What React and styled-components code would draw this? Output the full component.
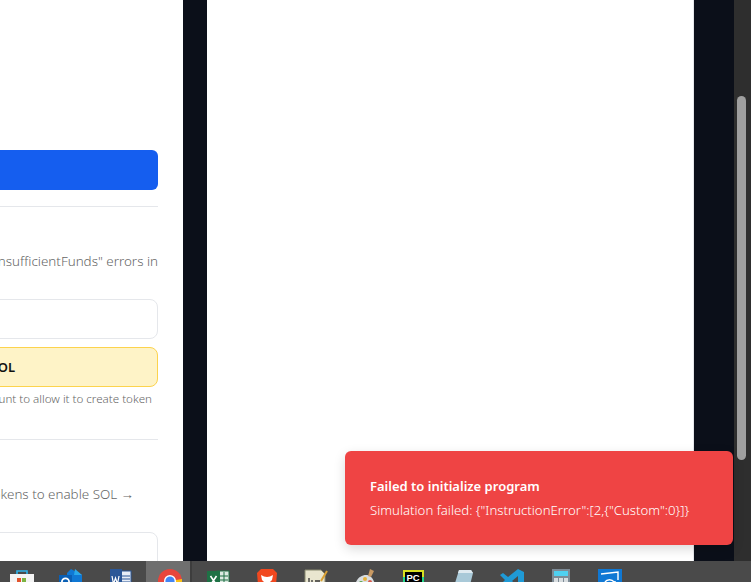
import React from 'react';
import styled, { createGlobalStyle } from 'styled-components';

const GlobalStyle = createGlobalStyle`
  html, body {
    margin: 0;
    padding: 0;
    height: 100%;
    overflow: hidden;
    background: #fff;
  }
  body {
    font-family: 'Noto Sans', 'Open Sans', sans-serif;
  }
`;

const Screen = styled.div`
  position: relative;
  width: 751px;
  height: 582px;
  overflow: hidden;
  display: flex;
  flex-direction: column;
`;

const Page = styled.div`
  flex: 1;
  min-height: 0;
  display: grid;
  grid-template-columns: 183px 24px 487px 40px 17px;
`;

const SidePanel = styled.section`
  background: #fff;
  overflow: hidden;
  padding: 150px 25px 0 0;
  display: flex;
  flex-direction: column;
  align-items: stretch;
`;

const Gutter = styled.div`
  background: #0b0f19;
`;

const Preview = styled.div`
  background: #fff;
  border-right: 1px solid #e5e7eb;
`;

const Track = styled.div`
  background: #2e2e2e;
  padding: 96px 5px 0 3px;
`;

const Thumb = styled.div`
  height: 364px;
  border-radius: 5px;
  background: #9f9f9f;
`;

const PrimaryButton = styled.div`
  height: 40px;
  flex: none;
  margin-left: -20px;
  background: #155eef;
  border-radius: 6px;
`;

const Divider = styled.hr`
  flex: none;
  align-self: stretch;
  height: 1px;
  margin: ${p => p.$top}px 0 0 -20px;
  border: 0;
  background: #e5e7eb;
`;

const Line = styled.p`
  margin: ${p => p.$top}px 0 0;
  padding-right: ${p => p.$inset || 0}px;
  display: flex;
  justify-content: flex-end;
  white-space: nowrap;
  font-size: ${p => p.$size || 13.4}px;
  font-weight: 300;
  line-height: 18px;
  color: #666;
`;

const Field = styled.div`
  flex: none;
  height: 40px;
  box-sizing: border-box;
  margin: ${p => p.$top}px 0 0 -20px;
  background: #fff;
  border: 1px solid #e5e7eb;
  border-radius: 8px;
`;

const Notice = styled.div`
  flex: none;
  height: 40px;
  box-sizing: border-box;
  margin: 8px 0 0 -20px;
  padding-right: 142px;
  display: flex;
  align-items: center;
  justify-content: flex-end;
  white-space: nowrap;
  font-size: 13px;
  font-weight: 600;
  color: #111;
  background: #fef3c7;
  border: 1px solid #fcd34d;
  border-radius: 8px;
`;

const Toast = styled.div`
  position: absolute;
  left: 345px;
  top: 451px;
  width: 388px;
  height: 94px;
  box-sizing: border-box;
  padding: 25px 25px 0;
  color: #fff;
  background: #ef4444;
  border-radius: 6px;
  box-shadow: 0 4px 12px rgba(0, 0, 0, 0.15);
`;

const ToastTitle = styled.div`
  font-size: 13px;
  font-weight: 600;
  line-height: 20px;
  white-space: nowrap;
`;

const ToastBody = styled.div`
  margin-top: 4px;
  font-size: 13.2px;
  font-weight: 300;
  line-height: 20px;
  white-space: nowrap;
  color: #fff;
`;

const Taskbar = styled.footer`
  flex: none;
  height: 21px;
  overflow: hidden;
  display: flex;
  margin-left: -3px;
  background: #4a4a4a;
`;

const Slot = styled.div`
  flex: none;
  width: 49px;
  box-sizing: border-box;
  padding-top: 8px;
  display: flex;
  justify-content: center;
  svg {
    flex: none;
    display: block;
  }
`;

const ActiveSlot = styled(Slot)`
  width: 46px;
  margin: 0 1px 0 2px;
  padding-left: 4px;
  background: #6f6f6f;
  border-right: 2px solid #3d3d3d;
`;

const Icon = ({ children }) => (
  <svg width="24" height="24" viewBox="0 0 24 24">
    {children}
  </svg>
);

const icons = [
  <Icon key="store">
    <path d="M7 5V2h10v3" fill="none" stroke="#2fb4ea" strokeWidth="1.6" />
    <rect x="0" y="5" width="24" height="19" fill="#f4f4f4" />
    <rect x="7" y="9" width="4" height="4" fill="#e2532c" />
    <rect x="12" y="9" width="4" height="4" fill="#7cb342" />
  </Icon>,
  <Icon key="outlook">
    <path d="M12 0l11 6v12H8V4z" fill="#0f78d4" />
    <path d="M16 0l7 6h-8z" fill="#28a8ea" />
    <rect x="0" y="6" width="13" height="18" fill="#0a5fb4" />
    <circle cx="6.5" cy="13" r="3.6" fill="none" stroke="#fff" strokeWidth="1.8" />
  </Icon>,
  <Icon key="word">
    <rect x="9" y="2" width="14" height="22" fill="#e8eef7" stroke="#2b5797" />
    <path d="M14 7h8M14 10h8M14 13h8" stroke="#2b5797" strokeWidth="1.2" />
    <rect x="2" y="0" width="12" height="24" fill="#2b5797" />
    <path d="M4 7l1.5 8 2-6 2 6L11 7" fill="none" stroke="#fff" strokeWidth="1.2" />
  </Icon>,
  <Icon key="chrome">
    <circle cx="12" cy="12" r="12" fill="#e8453c" />
    <path d="M3 19l9-7 9 7a12 12 0 0 1-18 0z" fill="#34a853" />
    <path d="M12 12L24 10a12 12 0 0 1-3 10z" fill="#fbc116" />
    <circle cx="12" cy="12" r="6" fill="#fff" />
    <circle cx="12" cy="12" r="4.6" fill="#4285f4" />
  </Icon>,
  <Icon key="excel">
    <rect x="11" y="2" width="12" height="22" fill="#dcebe2" stroke="#1e7145" />
    <path d="M14 7h8M14 11h8M14 15h8M18 3v16" stroke="#1e7145" strokeWidth="1" />
    <rect x="1" y="2" width="13" height="22" fill="#1e7145" />
    <path d="M4.5 7l6 9M10.5 7l-6 9" stroke="#fff" strokeWidth="1.6" />
  </Icon>,
  <Icon key="brave">
    <path d="M6 0h12l4 4-1 12-9 8-9-8L2 4z" fill="#f1481f" />
    <path d="M6 6c2 1 4 2 6 2s4-1 6-2l-1 5-3 3 1 2-3 2-3-2 1-2-3-3z" fill="#fff" />
  </Icon>,
  <Icon key="notes">
    <path d="M1 1h16l4 4v19H1z" fill="#e9e6cf" stroke="#8a8a70" />
    <path d="M5 9v9M8 11v7M11 12h5M11 15h5" stroke="#333" strokeWidth="1.3" />
    <path d="M17 12L23 2" stroke="#d9a033" strokeWidth="2" />
  </Icon>,
  <Icon key="palette">
    <path d="M1 24C1 11 7 6 13 6s10 7 10 18z" fill="#d8dde0" />
    <circle cx="8" cy="14" r="2" fill="#5aa54b" />
    <circle cx="12" cy="10" r="2" fill="#e8b23a" />
    <circle cx="17" cy="13" r="2" fill="#d85a4a" />
    <circle cx="6" cy="20" r="2" fill="#4a80c4" />
    <path d="M15 7l2-7 4 2-3 6z" fill="#c99a63" />
  </Icon>,
  <Icon key="pycharm">
    <rect x="1" y="1" width="21" height="23" fill="#21d789" />
    <rect x="1" y="1" width="21" height="7" fill="#d8e020" />
    <rect x="3" y="3" width="17" height="21" fill="#000" />
    <text x="4.5" y="12" fontSize="9.5" fontWeight="700" fill="#fff" fontFamily="Liberation Sans, sans-serif">PC</text>
  </Icon>,
  <Icon key="eraser">
    <path d="M8 1h12l2 3-5 20H1z" fill="#a9c9d8" />
    <path d="M8 1h12l2 3H7z" fill="#dfeaf0" />
  </Icon>,
  <Icon key="vscode">
    <path d="M18 0l6 3v17l-6 3-10-9-5 4-3-2 5-5-5-5 3-2 5 4z" fill="#1f9ad6" />
    <path d="M18 7v10l-6-5z" fill="#4a4a4a" />
  </Icon>,
  <Icon key="calc">
    <rect x="3" y="0" width="18" height="24" fill="#7d8b96" />
    <rect x="5" y="2" width="14" height="5" fill="#4fd0f0" />
    <rect x="5" y="9" width="4" height="4" fill="#d8dde0" />
    <rect x="10" y="9" width="4" height="4" fill="#d8dde0" />
    <rect x="15" y="9" width="4" height="4" fill="#d8dde0" />
  </Icon>,
  <Icon key="sync">
    <rect x="0" y="0" width="24" height="24" fill="#0f78d4" />
    <path d="M3 5l17-2v8" fill="none" stroke="#fff" strokeWidth="1.4" />
    <path d="M7 13c2-3 7-3 9 0M17 12v3h-3" fill="none" stroke="#fff" strokeWidth="1.4" />
  </Icon>,
];

export default function App() {
  return (
    <Screen>
      <GlobalStyle />
      <Page>
        <SidePanel>
          <PrimaryButton />
          <Divider $top={16} />
          <Line $top={45}>Add SOL to your account to avoid "InsufficientFunds" errors in</Line>
          <Field $top={29} />
          <Notice>Balance: 0 SOL</Notice>
          <Line $top={3} $size={11.6} $inset={6}>Send SOL to the account to allow it to create token</Line>
          <Divider $top={31} />
          <Line $top={45} $inset={24}>Wrap tokens to enable SOL →</Line>
          <Field $top={29} />
        </SidePanel>
        <Gutter />
        <Preview />
        <Gutter />
        <Track>
          <Thumb />
        </Track>
      </Page>
      <Taskbar>
        {icons.map((icon, i) => {
          const Cell = i === 3 ? ActiveSlot : Slot;
          return <Cell key={icon.key}>{icon}</Cell>;
        })}
      </Taskbar>
      <Toast>
        <ToastTitle>Failed to initialize program</ToastTitle>
        <ToastBody>Simulation failed: {'{"InstructionError":[2,{"Custom":0}]}'}</ToastBody>
      </Toast>
    </Screen>
  );
}
